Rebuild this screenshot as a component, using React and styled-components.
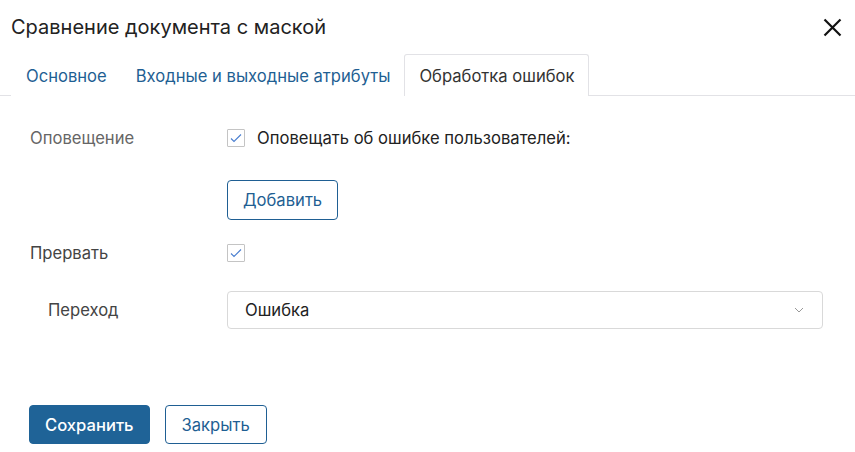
import React from 'react';
import styled, { createGlobalStyle } from 'styled-components';

const GlobalStyle = createGlobalStyle`
  body {
    margin: 0;
    background: #fff;
    font-family: Inter, Roboto, "Noto Sans", sans-serif;
    color: #222;
  }
`;

const Dialog = styled.div`
  width: 855px;
  height: 452px;
  display: flex;
  flex-direction: column;
  background: #fff;
`;

const Header = styled.div`
  height: 54px;
  display: flex;
  align-items: center;
  justify-content: space-between;
  padding: 0 12px 0 11px;
  box-sizing: border-box;
`;

const Title = styled.h1`
  margin: 0;
  font-size: 20px;
  font-weight: 400;
  color: #222;
`;

const CloseButton = styled.button`
  border: 0;
  background: none;
  padding: 0;
  width: 22px;
  height: 22px;
  display: flex;
  align-items: center;
  justify-content: center;
  cursor: pointer;
`;

const Tabs = styled.div`
  display: flex;
  align-items: flex-end;
  height: 41px;
  padding-left: 11px;
  border-bottom: 1px solid #e2e2e6;
`;

const Tab = styled.div`
  box-sizing: border-box;
  padding: 0 13px 0 14px;
  display: flex;
  align-items: center;
  font-size: 16.6px;
  color: ${(p) => (p.$active ? '#333' : '#1f5f93')};
  border: 1px solid ${(p) => (p.$active ? '#e2e2e6' : 'transparent')};
  border-bottom: 0;
  border-radius: 3px 3px 0 0;
  background: #fff;
  margin-bottom: -1px;
  height: ${(p) => (p.$active ? '42px' : '41px')};
`;

const Body = styled.div`
  flex: 1;
  display: flex;
  flex-direction: column;
  padding: 23px 32px 0 30px;
`;

const Row = styled.div`
  display: flex;
  align-items: center;
  min-height: ${(p) => p.$h || 38}px;
  margin-top: ${(p) => p.$mt || 0}px;
`;

const Label = styled.div`
  width: ${(p) => (p.$indent ? '179px' : '197px')};
  flex-shrink: 0;
  font-size: 16.6px;
  color: ${(p) => (p.$strong ? '#444' : '#666')};
  padding-left: ${(p) => (p.$indent ? '18px' : '0')};
`;

const Control = styled.div`
  flex: 1;
  display: flex;
  align-items: center;
  gap: 12px;
`;

const Box = styled.span`
  width: 18px;
  height: 18px;
  box-sizing: border-box;
  border: 1px solid #c4c4c4;
  border-radius: 1px;
  display: flex;
  align-items: center;
  justify-content: center;
  background: #fff;
`;

const CheckText = styled.span`
  font-size: 16.6px;
  color: #222;
`;

const OutlineButton = styled.button`
  height: 40px;
  box-sizing: border-box;
  padding: 0 15px;
  font-family: inherit;
  font-size: 16.6px;
  color: #1f5f93;
  background: #fff;
  border: 1px solid #1f5f93;
  border-radius: 4px;
`;

const Select = styled.div`
  flex: 1;
  height: 38px;
  box-sizing: border-box;
  border: 1px solid #d9d9d9;
  border-radius: 4px;
  display: flex;
  align-items: center;
  justify-content: space-between;
  padding: 0 18px 0 17px;
  font-size: 16.6px;
  color: #222;
`;

const Footer = styled.div`
  display: flex;
  gap: 15px;
  padding: 0 0 8px 29px;
`;

const PrimaryButton = styled(OutlineButton)`
  background: #1f6397;
  border-color: #1f6397;
  color: #fff;
  font-weight: 500;
  padding: 0 15px;
  height: 39px;
`;

const SecondaryButton = styled(OutlineButton)`
  padding: 0 16px;
  height: 39px;
`;

function Check() {
  return (
    <Box>
      <svg width="12" height="10" viewBox="0 0 12 10">
        <path d="M1 5.5 L4 8.5 L11 1.5" fill="none" stroke="#4a7fd0" strokeWidth="1.1" />
      </svg>
    </Box>
  );
}

export default function App() {
  return (
    <>
      <GlobalStyle />
      <Dialog>
        <Header>
          <Title>Сравнение документа с маской</Title>
          <CloseButton aria-label="Закрыть">
            <svg width="19" height="19" viewBox="0 0 19 19">
              <path d="M1.5 1.5 L17.5 17.5 M17.5 1.5 L1.5 17.5" stroke="#111" strokeWidth="2.2" />
            </svg>
          </CloseButton>
        </Header>
        <Tabs>
          <Tab>Основное</Tab>
          <Tab>Входные и выходные атрибуты</Tab>
          <Tab $active>Обработка ошибок</Tab>
        </Tabs>
        <Body>
          <Row>
            <Label>Оповещение</Label>
            <Control>
              <Check />
              <CheckText>Оповещать об ошибке пользователей:</CheckText>
            </Control>
          </Row>
          <Row $h={40} $mt={23}>
            <Label />
            <Control>
              <OutlineButton>Добавить</OutlineButton>
            </Control>
          </Row>
          <Row $mt={14}>
            <Label $strong>Прервать</Label>
            <Control>
              <Check />
            </Control>
          </Row>
          <Row $mt={19}>
            <Label $strong $indent>Переход</Label>
            <Control>
              <Select>
                <span>Ошибка</span>
                <svg width="10" height="6" viewBox="0 0 10 6">
                  <path d="M1 1 L5 5 L9 1" fill="none" stroke="#999" strokeWidth="1" />
                </svg>
              </Select>
            </Control>
          </Row>
        </Body>
        <Footer>
          <PrimaryButton>Сохранить</PrimaryButton>
          <SecondaryButton>Закрыть</SecondaryButton>
        </Footer>
      </Dialog>
    </>
  );
}
